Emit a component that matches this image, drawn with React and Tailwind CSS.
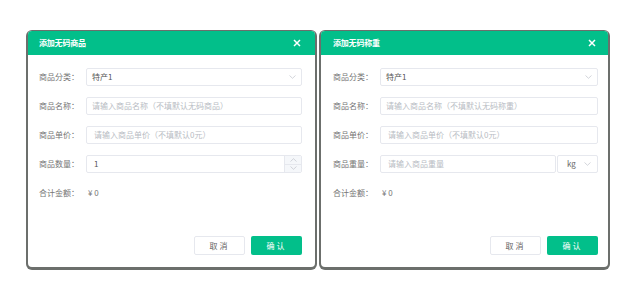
import React from "react";

const font = { fontFamily: '"Noto Sans CJK SC", "Noto Sans", sans-serif' };

function Chevron({ className = "" }) {
  return (
    <svg width="7" height="4" viewBox="0 0 7 4" className={className}>
      <path d="M0.5 0.5 L3.5 3.3 L6.5 0.5" fill="none" stroke="#c0c4cc" strokeWidth="0.7" />
    </svg>
  );
}

function Row({ label, children }) {
  return (
    <div className="flex items-center h-[18px]">
      <div className="w-[47px] shrink-0 text-[8px] text-[#757575]">{label}</div>
      <div className="flex-1 h-full flex">{children}</div>
    </div>
  );
}

function Box({ children, className = "" }) {
  return (
    <div className={"h-full border border-[#e6e8ee] rounded-[2px] bg-white flex items-center text-[8px] " + className}>
      {children}
    </div>
  );
}

function Dialog({ title, name, weight, padL, padR, closeR }) {
  return (
    <div className="w-[291px] h-[240px] bg-[#6c6f6c] rounded-[6px] pt-[1px] px-[2px] pb-[3px] flex">
      <div className="flex-1 bg-white rounded-[4px] overflow-hidden flex flex-col" style={font}>
        <div className={"h-[24px] bg-[#02bf8a] flex items-center justify-between shrink-0 " + padL + " " + closeR}>
          <span className="text-white text-[8px] font-bold tracking-[-0.2px]">{title}</span>
          <svg width="8" height="8" viewBox="0 0 8 8">
            <path d="M1 1 L7 7 M7 1 L1 7" stroke="white" strokeWidth="1.5" />
          </svg>
        </div>
        <div className={"flex-1 flex flex-col pt-[13px] pb-[12px] " + padL + " " + padR}>
          <div className="flex flex-col gap-[11px]">
            <Row label="商品分类：">
              <Box className="flex-1 px-[5px] justify-between text-[#555]">
                <span>特产1</span>
                <Chevron />
              </Box>
            </Row>
            <Row label="商品名称：">
              <Box className="flex-1 px-[5px] text-[#b8bcc3]">请输入商品名称（不填默认{name}）</Box>
            </Row>
            <Row label="商品单价：">
              <Box className="flex-1 px-[7px] text-[#b8bcc3]">请输入商品单价（不填默认0元）</Box>
            </Row>
            {weight ? (
              <Row label="商品重量：">
                <Box className="flex-1 px-[7px] text-[#b8bcc3]">请输入商品重量</Box>
                <Box className="w-[41px] ml-px pl-[9px] pr-[6px] justify-between text-[#666]">
                  <span>kg</span>
                  <Chevron />
                </Box>
              </Row>
            ) : (
              <Row label="商品数量：">
                <Box className="flex-1 pl-[7px] text-[#555] overflow-hidden">
                  <span className="flex-1">1</span>
                  <div className="w-[17px] h-full bg-[#f5f7fa] border-l border-[#e6e8ee] flex flex-col">
                    <div className="flex-1 flex items-center justify-center border-b border-[#e6e8ee]">
                      <Chevron className="rotate-180" />
                    </div>
                    <div className="flex-1 flex items-center justify-center">
                      <Chevron />
                    </div>
                  </div>
                </Box>
              </Row>
            )}
            <Row label="合计金额：">
              <span className="text-[8px] text-[#757575] pl-[2px] self-center">¥ 0</span>
            </Row>
          </div>
          <div className="mt-auto flex justify-end gap-[6px]">
            <div className="w-[51px] h-[19px] border border-[#e6e8ee] rounded-[2px] flex items-center justify-center text-[8px] text-[#666] tracking-[2px]">
              取消
            </div>
            <div className="w-[51px] h-[19px] bg-[#02bf8a] rounded-[2px] flex items-center justify-center text-[8px] text-white tracking-[2px]">
              确认
            </div>
          </div>
        </div>
      </div>
    </div>
  );
}

export default function App() {
  return (
    <div className="w-[638px] h-[297px] bg-white pt-[30px] pl-[26px] flex gap-[2px]">
      <Dialog title="添加无码商品" name="无码商品" padL="pl-[11px]" padR="pr-[13px]" closeR="pr-[14px]" />
      <Dialog title="添加无码称重" name="无码称重" weight padL="pl-[12px]" padR="pr-[10px]" closeR="pr-[12px]" />
    </div>
  );
}
